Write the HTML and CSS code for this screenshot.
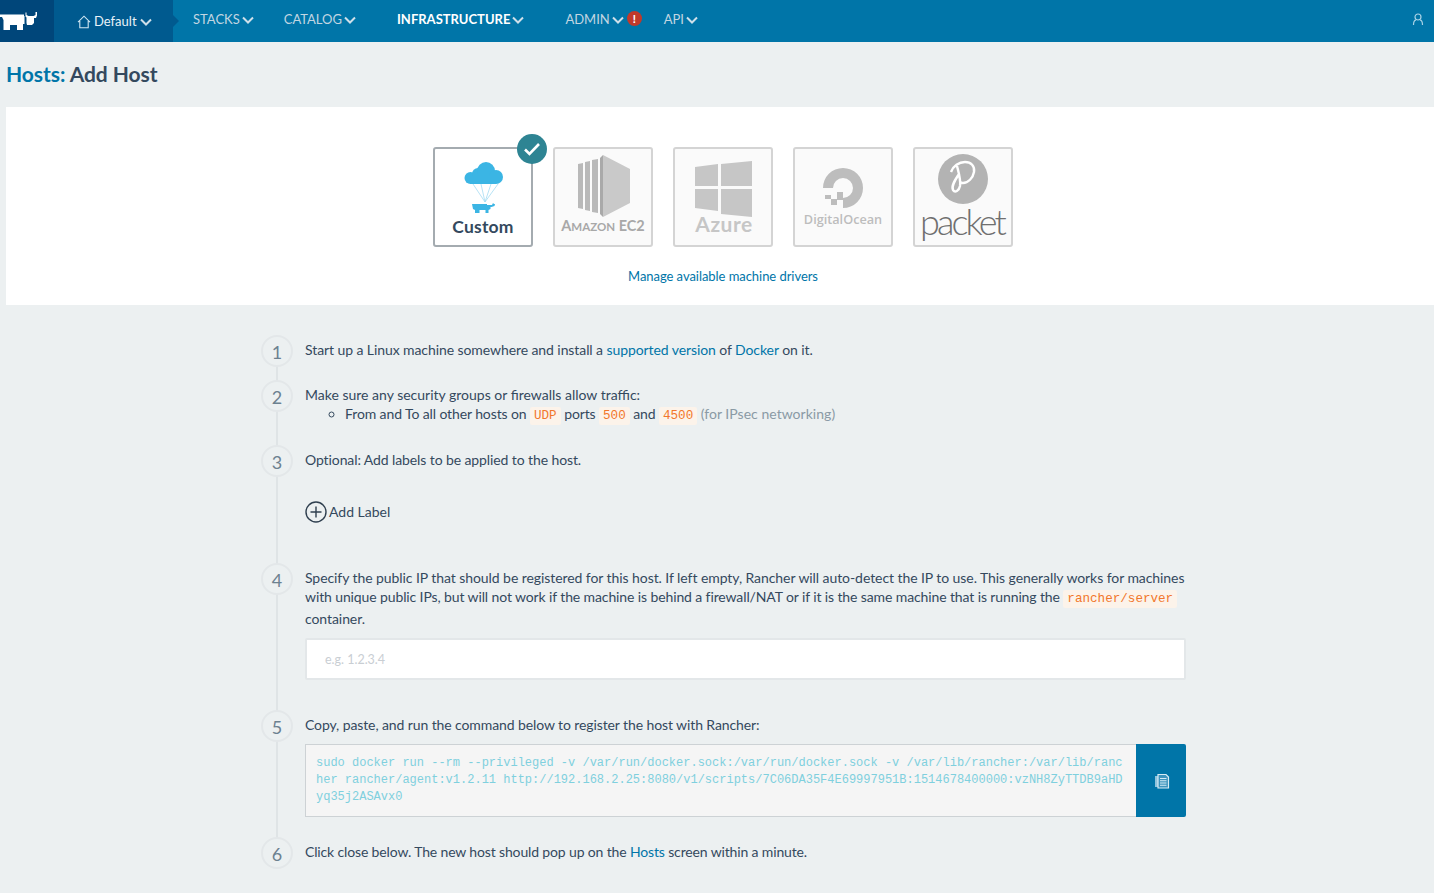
FILE: index.html
```html
<!DOCTYPE html>
<html lang="en">
<head>
    <meta charset="UTF-8">
    <title>Hosts: Add Host</title>
    <link rel="stylesheet" href="styles.css">
</head>
<body>
    <header class="nav">
        <a class="nav-logo">
            <svg width="40" height="22" viewBox="0 0 40 22"><path fill="#fff" d="M0 3.500h24v1.500h.5v8h-1.500v6h-6v-5H10v5H3.500V9L2 6H0z"/><path fill="#fff" d="M25.500 1.500h1v2.500l2 1h5l2-1V1h1.500v3.500l-1 2.500h-2v5l-2 2h-5l-.5-2V6.500l-1-1z"/></svg>
        </a>
        <a class="nav-env">
            <svg class="home" width="14" height="14" viewBox="0 0 14 14"><path d="M1 7.200 7 1.200l6 6M2.800 6v6.800h8.400V6" fill="none" stroke="#cfe6f2" stroke-width="1.100"/></svg>
            <span>Default</span>
            <svg class="chev" width="12" height="8" viewBox="0 0 12 8"><path d="M1 1.500l5 5 5-5" /></svg>
        </a>
        <nav class="nav-items">
            <a class="nav-item stacks">STACKS<svg class="chev" width="12" height="8" viewBox="0 0 12 8"><path d="M1 1.500l5 5 5-5" /></svg></a>
            <a class="nav-item catalog">CATALOG<svg class="chev" width="12" height="8" viewBox="0 0 12 8"><path d="M1 1.500l5 5 5-5" /></svg></a>
            <a class="nav-item infra active">INFRASTRUCTURE<svg class="chev" width="12" height="8" viewBox="0 0 12 8"><path d="M1 1.500l5 5 5-5" /></svg></a>
            <a class="nav-item admin">ADMIN<svg class="chev" width="12" height="8" viewBox="0 0 12 8"><path d="M1 1.500l5 5 5-5" /></svg><span class="alert">!</span></a>
            <a class="nav-item api">API<svg class="chev" width="12" height="8" viewBox="0 0 12 8"><path d="M1 1.500l5 5 5-5" /></svg></a>
        </nav>
        <a class="nav-user">
            <svg width="12" height="13" viewBox="0 0 12 13"><circle cx="6" cy="4" r="3" fill="none" stroke="#a9d3e6" stroke-width="1.200"/><path d="M1.500 12c0-3 1.500-5 2.500-5.200M10.500 12c0-3-1.500-5-2.500-5.200" fill="none" stroke="#a9d3e6" stroke-width="1.200"/></svg>
        </a>
    </header>

    <main class="page">
        <h1 class="title"><span class="title-a">Hosts:</span> Add Host</h1>

        <section class="drivers">
            <div class="driver-list">
                <div class="driver selected">
                    <span class="badge"><svg width="18" height="14" viewBox="0 0 18 14"><path d="M2 7.500l4.500 4.500L16 2" fill="none" stroke="#fff" stroke-width="2.600"/></svg></span>
                    <svg class="chute" width="40" height="52" viewBox="0 0 40 52">
                        <g fill="#3bb5e4"><circle cx="6.500" cy="17" r="6"/><circle cx="14" cy="13" r="6"/><circle cx="22" cy="10" r="9"/><circle cx="32" cy="16" r="7"/><path d="M6 15h26v8H6z"/></g>
                        <path d="M9 23l12 18M17 23l4 18M27 23l-6 18M34 23L21 41" stroke="#a5dcf2" stroke-width=".8" fill="none"/>
                        <path fill="#3bb5e4" d="M8 43h15v1h5l1-2 1 1h1l-.5 2-3 1h-1v2l-2 1v3h-3v-3h-6v3H11v-3l-2-1z"/>
                    </svg>
                    <span class="driver-name custom">Custom</span>
                </div>
                <div class="driver">
                    <svg class="ec2" width="54" height="62" viewBox="0 0 54 62">
                        <path fill="#b9b9b9" d="M1 9l5-1v46l-5-1zM8 7l5-1v50l-5-1zM15 5l6-1v54l-6-1z"/>
                        <path fill="#a9a9a9" d="M23 3l3-3v62l-3-3z"/>
                        <path fill="#c9c9c9" d="M26 0l27 14v34L26 62z"/>
                    </svg>
                    <span class="driver-name amazon">A<small>MAZON</small> EC2</span>
                </div>
                <div class="driver">
                    <svg class="win" width="58" height="56" viewBox="0 0 58 56">
                        <path fill="#c6c6c6" d="M0 6l23-3v22H0zM26 3l31-3v25H26zM0 28h23v22L0 47zM26 28h31v28l-31-3z"/>
                    </svg>
                    <span class="driver-name azure">Azure</span>
                </div>
                <div class="driver">
                    <svg class="ocean" width="40" height="40" viewBox="0 0 40 40">
                        <path d="M0 20A20 20 0 1 1 20 40V30A10 10 0 1 0 10 20z" fill="#bdbdbd"/>
                        <path fill="#bdbdbd" d="M14 24h6v8h-6zM8 31h6v6H8zM2 27h6v4H2z"/>
                    </svg>
                    <span class="driver-name ocean-name">DigitalOcean</span>
                </div>
                <div class="driver">
                    <svg class="packet-mark" width="50" height="50" viewBox="0 0 50 50">
                        <circle cx="25" cy="25" r="25" fill="#b3b3b3"/>
                        <path d="M13 18c2-6 8-10 14-10 6 0 10 4 9 10-1 6-6 11-11 11-2 0-3-1-3-2M19 12c2 8 4 14 3 20-1 5-5 7-7 4-2-4 2-10 6-16" fill="none" stroke="#fff" stroke-width="2.400"/>
                    </svg>
                    <span class="driver-name packet">packet</span>
                </div>
            </div>
            <a class="manage">Manage available machine drivers</a>
        </section>

        <ol class="steps">
            <li class="step step-1">
                <span class="num">1</span>
                <div class="body">Start up a Linux machine somewhere and install a <a>supported version</a> of <a>Docker</a> on it.</div>
            </li>
            <li class="step step-2">
                <span class="num">2</span>
                <div class="body">Make sure any security groups or firewalls allow traffic:
                    <ul class="rules">
                        <li>From and To all other hosts on <code>UDP</code> ports <code>500</code> and <code>4500</code> <span class="muted">(for IPsec networking)</span></li>
                    </ul>
                </div>
            </li>
            <li class="step step-3">
                <span class="num">3</span>
                <div class="body">Optional: Add labels to be applied to the host.
                    <div class="add-label">
                        <svg width="22" height="22" viewBox="0 0 22 22"><circle cx="11" cy="11" r="10" fill="none" stroke="#2f3f4f" stroke-width="1.400"/><path d="M11 5.500v11M5.500 11h11" stroke="#2f3f4f" stroke-width="1.400"/></svg>
                        <span>Add Label</span>
                    </div>
                </div>
            </li>
            <li class="step step-4">
                <span class="num">4</span>
                <div class="body">
                    <p class="para">Specify the public IP that should be registered for this host. If left empty, Rancher will auto-detect the IP to use. This generally works for machines <span class="para-tight">with unique public IPs, but will not work if the machine is behind a firewall/NAT or if it is the same machine that is running the</span> <code>rancher/server</code> container.</p>
                    <input class="ip" type="text" placeholder="e.g. 1.2.3.4">
                </div>
            </li>
            <li class="step step-5">
                <span class="num">5</span>
                <div class="body">Copy, paste, and run the command below to register the host with Rancher:
                    <div class="command">
                        <pre class="cmd-text">sudo docker run --rm --privileged -v /var/run/docker.sock:/var/run/docker.sock -v /var/lib/rancher:/var/lib/rancher rancher/agent:v1.2.11 http://192.168.2.25:8080/v1/scripts/7C06DA35F4E69997951B:1514678400000:vzNH8ZyTTDB9aHDyq35j2ASAvx0</pre>
                        <button class="copy" type="button">
                            <svg width="16" height="16" viewBox="0 0 16 16"><path d="M1 3h8v11H1z" fill="#8fc3dc"/><path d="M4 1.500h8l2.500 2.500v11H4z" fill="#3d94bd" stroke="#d6ebf5" stroke-width="1.200"/><path d="M6 5.500h6.500M6 7.800h6.500M6 10h6.500M6 12.300h6.500" stroke="#d6ebf5" stroke-width="1.100"/></svg>
                        </button>
                    </div>
                </div>
            </li>
            <li class="step step-6">
                <span class="num">6</span>
                <div class="body">Click close below. The new host should pop up on the <a>Hosts</a> screen within a minute.</div>
            </li>
        </ol>
    </main>
</body>
</html>
```

FILE: styles.css
```css
* {box-sizing: border-box}
body {margin: 0; background: #ecf0f1; color: #34495e; font-family: Lato, sans-serif; font-size: 14px; line-height: 19px}
a {color: #0075a8; text-decoration: none}

.nav {display: flex; height: 42px; background: #0075a8; align-items: stretch}
.nav-logo {width: 54px; background: #00467a; padding-top: 11px}
.nav-env {width: 119px; background: #005a8f; color: #e8f2f8; display: flex; align-items: center; padding-left: 23px; padding-top: 1px; font-size: 13px; position: relative}
.nav-env:after {content: ""; position: absolute; left: 100%; top: 15px; border-left: 6px solid #005a8f; border-top: 6px solid transparent; border-bottom: 6px solid transparent}
.nav-env span {margin-left: 3px; margin-right: 3px}
.chev {fill: none; stroke: #cfe0ea; stroke-width: 2}
.nav-items {display: flex; flex: 1}
.nav-item {display: flex; align-items: center; color: #c2d6e2; font-size: 13px; padding-bottom: 4px; position: relative}
.nav-item .chev {margin-left: 2px; margin-top: 1px}
.stacks {margin-left: 20px}
.catalog {margin-left: 30px}
.infra {margin-left: 41px}
.admin {margin-left: 41px}
.api {margin-left: 22px}
.active {color: #fff; font-weight: 700}
.alert {width: 15px; height: 15px; border-radius: 50%; background: #c1392b; color: #fff; font-size: 11px; font-weight: 900; line-height: 15px; text-align: center; margin-left: 3px; margin-top: -2px}
.nav-user {display: flex; align-items: center; padding-right: 10px; padding-bottom: 3px}

.page {padding: 0 0 0 6px}
.title {margin: 0; font-size: 21px; line-height: 30px; font-weight: 700; color: #34495e; padding: 17px 0 18px; letter-spacing: -.05px}
.title-a {color: #0075a8}

.drivers {background: #fff; height: 198px; padding: 40px 0 0 6px; text-align: center}
.driver-list {display: flex; justify-content: center; gap: 20px}
.driver {width: 100px; height: 100px; background: #fafafa; border: 2px solid #d4d4d4; border-radius: 3px; position: relative; display: flex; flex-direction: column; align-items: center}
.driver.selected {background: #fff; border-color: #a4abb0}
.badge {position: absolute; right: -16px; top: -15px; width: 30px; height: 30px; border-radius: 50%; background: #2e8493; display: flex; align-items: center; justify-content: center}
.driver-name {line-height: 1; white-space: nowrap}
.chute {margin: 12px 0 0 2px}
.custom {font-size: 17.500px; font-weight: 700; color: #34495e; margin-top: 5px; letter-spacing: .2px}
.ec2 {margin: 6px 0 0 2px}
.amazon {font-size: 14.500px; color: #a8a8a8; font-weight: 700; margin-top: 2px}
.amazon small {font-size: 11.500px}
.win {margin: 12px 0 -1px 2px}
.azure {font-size: 21px; font-weight: 700; color: #c6c6c6; margin: -3px 0 0 2px; letter-spacing: .5px}
.ocean {margin-top: 19px}
.ocean-name {font-family: "Open Sans", sans-serif; font-size: 12.700px; font-weight: 600; color: #bdbdbd; margin-top: 5px}
.packet-mark {margin-top: 5px}
.packet {font-family: Lato, sans-serif; font-weight: 300; font-size: 36px; color: #6f6f6f; margin: -1px 2px 0 0; letter-spacing: -2.900px}
.manage {display: block; margin-top: 20px; font-size: 13px; letter-spacing: -.05px}

.steps {list-style: none; margin: 0; padding: 0; margin-left: 255px; width: 925px; position: relative; padding-top: 30px}
.steps:before {content: ""; position: absolute; left: 15px; top: 60px; bottom: 40px; width: 2px; background: #dfe4e6}
.step {display: flex; position: relative}
.num {flex: none; width: 32px; height: 32px; border-radius: 50%; border: 2px solid #e3e7e9; background: #ecf0f1; color: #6c8190; font-size: 18px; line-height: 30px; text-align: center; margin-right: 12px; margin-top: 0}
.body {flex: 1; padding-top: 5px; min-width: 0}
.step-1 {height: 45px; letter-spacing: -.083px}
.step-2 {height: 65px}
.step-3 {height: 118px; letter-spacing: -.1px}
.step-4 {height: 147px}
.step-5 {height: 127px; letter-spacing: -.1px}
.step-6 {height: 55px; letter-spacing: -.145px}
.rules {margin: 0; padding-left: 40px; list-style-type: circle; letter-spacing: -.11px}
code {font-family: "Liberation Mono", monospace; font-size: 12.600px; line-height: 19px; letter-spacing: 0; color: #f2772b; background: #fcf3ea; padding: 2px 4px; border-radius: 2px}
.muted {color: #8a9aa5; letter-spacing: .03px}
.add-label {display: flex; align-items: center; gap: 2px; margin-top: 31px; letter-spacing: 0}
.add-label svg {transform: translateY(1px)}
.para {margin: 0; line-height: 19px; letter-spacing: -.07px}
.para-tight {letter-spacing: -.115px}
.ip {display: block; width: 881px; height: 42px; margin-top: 10px; border: 2px solid #e3e7e9; background: #fff; padding: 0 18px; font-family: Lato, sans-serif; font-size: 12.500px; border-radius: 2px; outline: none}
.ip::placeholder {color: #c9ced3}
.command {display: flex; width: 881px; height: 73px; margin-top: 10px}
.cmd-text {flex: 1; margin: 0; background: #f5f5f5; border: 1px solid #cdd2d5; border-right: 0; padding: 10px 12px 0 10px; font-family: "Liberation Mono", monospace; font-size: 12px; line-height: 17px; letter-spacing: 0; color: #7fd0de; white-space: pre-wrap; word-break: break-all}
.copy {flex: none; width: 50px; background: #0075a8; border: 0; border-radius: 0 2px 2px 0; padding: 0 0 0 2px; display: flex; align-items: center; justify-content: center}
```
